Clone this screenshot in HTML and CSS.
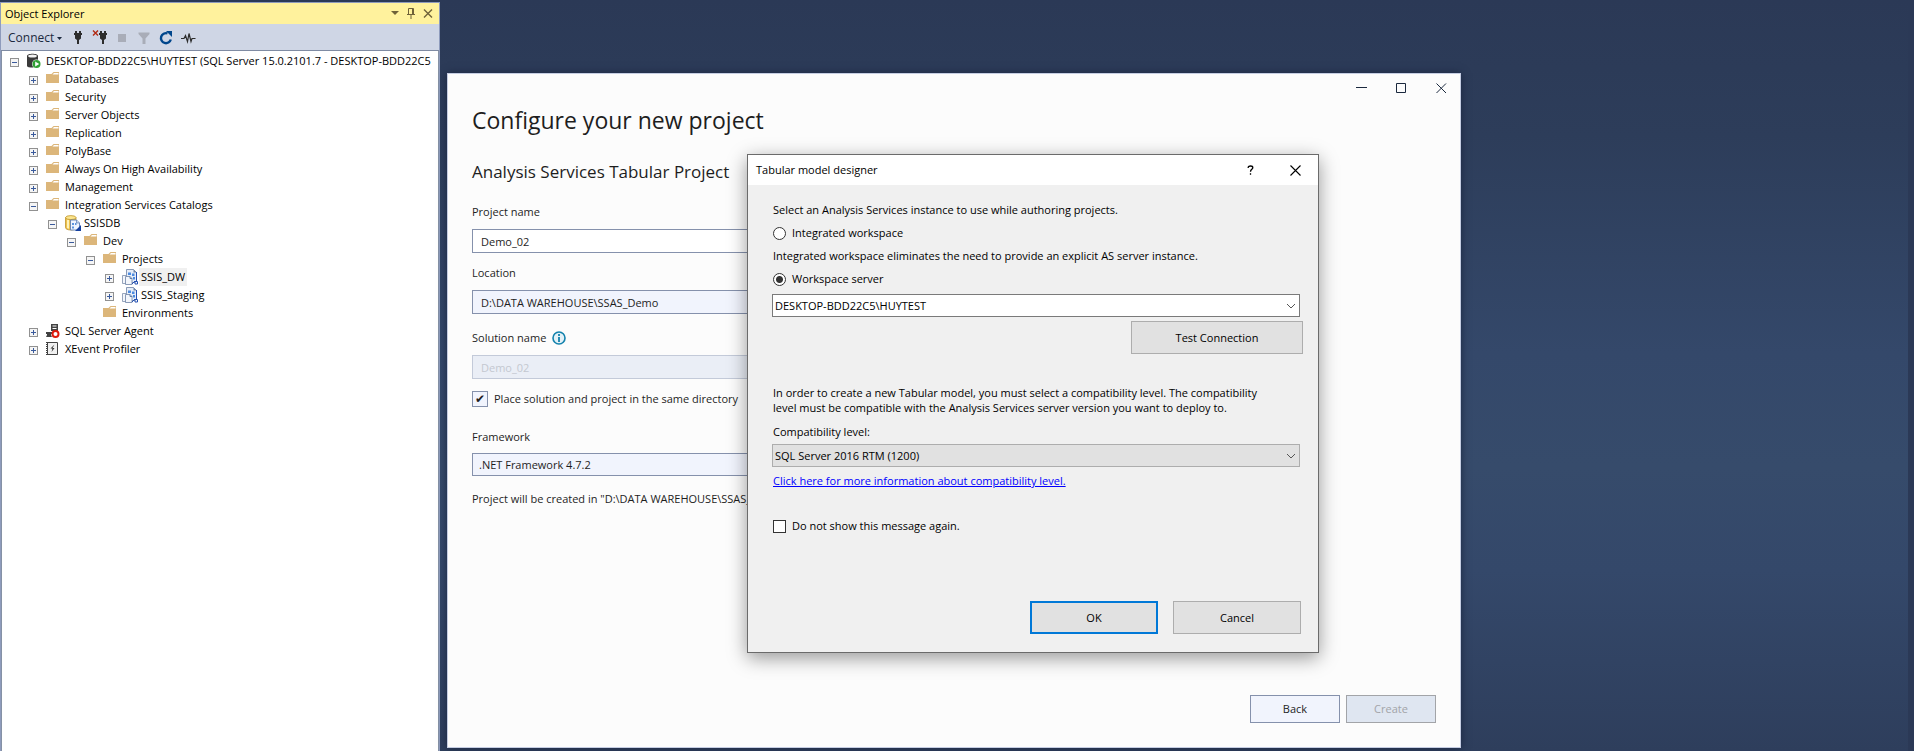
FILE: index.html
```html
<!DOCTYPE html>
<html lang="en">
<head>
<meta charset="utf-8">
<title>Object Explorer</title>
<link rel="stylesheet" href="styles.css">
</head>
<body>
<svg width="0" height="0" class="sprites" aria-hidden="true">
  <symbol id="folder" viewBox="0 0 16 16">
    <path d="M0 3h5.500l2-2H13v11H0z" fill="#dcb67a"/>
    <path d="M6.500 3.500l1.500-1.500h4.500v1.500z" fill="#fff"/>
  </symbol>
  <symbol id="catalog" viewBox="0 0 16 16">
    <path d="M.5 2.500v10c0 1.500 2 2.500 5.500 2.500s5-1 5-2.500v-10z" fill="#efc24c" stroke="#b88a1c" stroke-width=".7"/>
    <path d="M2 4v9l2 .8V5z" fill="#fff3b8"/>
    <ellipse cx="5.800" cy="2.600" rx="5.200" ry="2" fill="#fbe58e" stroke="#b88a1c" stroke-width=".7"/>
    <path d="M5.500 5h6l3 3v7h-9z" fill="#eef4ff" stroke="#5f7fb5" stroke-width=".9"/>
    <path d="M11.500 5v3h3" fill="#c5d6f0" stroke="#5f7fb5" stroke-width=".7"/>
    <path d="M7 8h2v2H7zM10 8h1.500v2H10zM7 11.500h2v2H7z" fill="#5c93dd"/>
    <path d="M16 10v6h-6z" fill="#1440a0"/>
  </symbol>
  <symbol id="package" viewBox="0 0 16 16">
    <path d="M4.500 .5h7l3 3v10h-10z" fill="#e6edf8" stroke="#6d83a6" stroke-width=".8"/>
    <path d="M11.500 .5v3h3z" fill="#6d83a6"/>
    <path d="M6 3.500h3V6H6zM10 4.500h2.500V7H10zM11 8h2v2.500h-2z" fill="#4c8be0"/>
    <path d="M.5 6.500h4v8h-4z" fill="#f3f6fb" stroke="#7d8fac" stroke-width=".8"/>
    <path d="M3.500 7.500h4.500l2 2v6H3.500z" fill="#f3f6fb" stroke="#6d83a6" stroke-width=".8"/>
    <path d="M8 7.500v2h2" fill="none" stroke="#56749f" stroke-width=".9"/>
    <path d="M14.500 3v9M10 15l3-3" fill="none" stroke="#2451b2"/>
    <path d="M13 12.500h2.500V15H13z" fill="#fff" stroke="#2451b2"/>
  </symbol>
</svg>

<aside class="explorer" aria-label="Object Explorer">
  <header class="pane-title">
    <h2>Object Explorer</h2>
    <button class="flat" aria-label="Window position"><svg width="8" height="5" viewBox="0 0 8 5"><path d="M0 0h8L4 4z" fill="#6f6239"/></svg></button>
    <button class="flat" aria-label="Auto hide"><svg width="8" height="11" viewBox="0 0 8 11" fill="none" stroke="#6f6239"><path d="M1.500 6V.5h5V6M0 6.500h8M4 7v4M5.500 1v5"/></svg></button>
    <button class="flat" aria-label="Close"><svg width="10" height="9" viewBox="0 0 10 9"><path d="M1 .5l8 8M9 .5l-8 8" stroke="#6f6239" stroke-width="1.400"/></svg></button>
  </header>
  <div class="toolbar" role="toolbar">
    <button class="flat connect">Connect<svg width="5" height="3" viewBox="0 0 5 3"><path d="M0 0h5L2.500 3z" fill="#1b293e"/></svg></button>
    <button class="flat" aria-label="Connect server"><svg width="16" height="16" viewBox="0 0 16 16" fill="#2d2d2d"><path d="M5 1h2v2h2V1h2v2h1v2h-1v3.500L9 10v4H7v-4L5 8.500V5H4V3h1z"/></svg></button>
    <button class="flat" aria-label="Disconnect"><svg width="16" height="16" viewBox="0 0 16 16" fill="#2d2d2d"><path d="M8 1h2v2h2V1h2v2h1v2h-1v3.500L12 10v4h-2v-4L8 8.500V5H7V3h1z"/><path d="M1 .5l5 5M6 .5l-5 5" stroke="#b22a12" stroke-width="1.400"/></svg></button>
    <button class="flat" aria-label="Stop" disabled><svg width="16" height="16" viewBox="0 0 16 16"><path d="M4 4h8v8H4z" fill="#a9adb8"/></svg></button>
    <button class="flat" aria-label="Filter" disabled><svg width="16" height="16" viewBox="0 0 16 16"><path d="M2.500 2.500h11v1.500L9.500 8.500V14h-3V8.500l-4-4.500z" fill="#a9adb8"/></svg></button>
    <button class="flat" aria-label="Refresh"><svg width="16" height="16" viewBox="0 0 16 16"><path d="M12.800 9.500A5 5 0 1 1 9.500 3.400" fill="none" stroke="#00468c" stroke-width="2.400"/><path d="M8 1h6v6z" fill="#00468c"/></svg></button>
    <button class="flat" aria-label="Activity monitor"><svg width="16" height="16" viewBox="0 0 16 16"><path d="M1 8.500h3l1.500-3 2 6 1.500-8 2 8 1-3h3.500" fill="none" stroke="#2d2d2d" stroke-width="1.200"/></svg></button>
  </div>
  <ul class="tree" role="tree">
    <li class="row l0"><button class="exp minus" aria-label="Collapse"></button><svg class="ico" viewBox="0 0 16 16"><path d="M0 3c0-3 11-3 11 0v10c0 2-11 2-11 0z" fill="#3a3a3a"/><ellipse cx="5.500" cy="3" rx="4.300" ry="1.500" fill="#f3f3f3"/><circle cx="9.500" cy="11" r="4.500" fill="#fff"/><circle cx="9.500" cy="11" r="4" fill="#32a036"/><path d="M8.200 8.500v5l4-2.500z" fill="#fff"/></svg><span>DESKTOP-BDD22C5\HUYTEST (SQL Server 15.0.2101.7 - DESKTOP-BDD22C5</span></li>
    <li class="row l1"><button class="exp" aria-label="Expand"></button><svg class="ico"><use href="#folder"/></svg><span>Databases</span></li>
    <li class="row l1"><button class="exp" aria-label="Expand"></button><svg class="ico"><use href="#folder"/></svg><span>Security</span></li>
    <li class="row l1"><button class="exp" aria-label="Expand"></button><svg class="ico"><use href="#folder"/></svg><span>Server Objects</span></li>
    <li class="row l1"><button class="exp" aria-label="Expand"></button><svg class="ico"><use href="#folder"/></svg><span>Replication</span></li>
    <li class="row l1"><button class="exp" aria-label="Expand"></button><svg class="ico"><use href="#folder"/></svg><span>PolyBase</span></li>
    <li class="row l1"><button class="exp" aria-label="Expand"></button><svg class="ico"><use href="#folder"/></svg><span>Always On High Availability</span></li>
    <li class="row l1"><button class="exp" aria-label="Expand"></button><svg class="ico"><use href="#folder"/></svg><span>Management</span></li>
    <li class="row l1"><button class="exp minus" aria-label="Collapse"></button><svg class="ico"><use href="#folder"/></svg><span>Integration Services Catalogs</span></li>
    <li class="row l2"><button class="exp minus" aria-label="Collapse"></button><svg class="ico"><use href="#catalog"/></svg><span>SSISDB</span></li>
    <li class="row l3"><button class="exp minus" aria-label="Collapse"></button><svg class="ico"><use href="#folder"/></svg><span>Dev</span></li>
    <li class="row l4"><button class="exp minus" aria-label="Collapse"></button><svg class="ico"><use href="#folder"/></svg><span>Projects</span></li>
    <li class="row l5"><button class="exp" aria-label="Expand"></button><svg class="ico"><use href="#package"/></svg><span class="selected">SSIS_DW</span></li>
    <li class="row l5"><button class="exp" aria-label="Expand"></button><svg class="ico"><use href="#package"/></svg><span>SSIS_Staging</span></li>
    <li class="row l4 leaf"><svg class="ico"><use href="#folder"/></svg><span>Environments</span></li>
    <li class="row l1"><button class="exp" aria-label="Expand"></button><svg class="ico" viewBox="0 0 16 16"><path d="M5 1h7v7H5z" fill="#424242"/><path d="M6.500 3h4M6.500 5.500h4" stroke="#fff"/><path d="M0 9h6v2H5v1l1 2H0l1-2v-1H0z" fill="#424242"/><circle cx="9.500" cy="11" r="3" fill="#fff" stroke="#e01b0c" stroke-width="2"/></svg><span>SQL Server Agent</span></li>
    <li class="row l1"><button class="exp" aria-label="Expand"></button><svg class="ico" viewBox="0 0 16 16"><path d="M1.500 1.500h10v12h-10z" fill="#f0f0f0" stroke="#424242"/><path d="M1 1v13" stroke="#424242" stroke-width="2" stroke-dasharray="1 1"/><path d="M8.500 3.500L4.500 7.500h2L5.500 11 8.500 7h-2L8.500 3.500z" fill="#303030"/></svg><span>XEvent Profiler</span></li>
  </ul>
</aside>

<main class="wizard">
  <div class="window-buttons">
    <button class="flat" aria-label="Minimize"><svg width="11" height="11" viewBox="0 0 11 11"><path d="M0 4.500h11" stroke="#1b293e"/></svg></button>
    <button class="flat" aria-label="Maximize"><svg width="11" height="11" viewBox="0 0 11 11"><path d="M.5 .5h9v9h-9z" fill="none" stroke="#1b293e"/></svg></button>
    <button class="flat" aria-label="Close"><svg width="11" height="11" viewBox="0 0 11 11"><path d="M.5 .5l9.500 9.500M10 .5L.5 10" stroke="#1b293e"/></svg></button>
  </div>
  <form class="project-form">
    <h1>Configure your new project</h1>
    <h2>Analysis Services Tabular Project</h2>
    <label for="name">Project name</label>
    <input class="field" id="name" type="text" value="Demo_02">
    <label for="location">Location</label>
    <input class="field tinted" id="location" type="text" value="D:\DATA WAREHOUSE\SSAS_Demo">
    <label for="solution" class="with-info">Solution name
      <svg width="14" height="14" viewBox="0 0 14 14"><circle cx="7" cy="7" r="6" fill="#e3f1f7" stroke="#1382ad" stroke-width="1.600"/><path d="M7 3v2M7 6v5" stroke="#1382ad" stroke-width="1.800"/></svg></label>
    <input class="field" id="solution" type="text" value="Demo_02" disabled>
    <div class="same-dir">
      <input id="same" type="checkbox" checked>
      <label for="same">Place solution and project in the same directory</label>
    </div>
    <label for="framework">Framework</label>
    <select class="field tinted framework" id="framework"><option>.NET Framework 4.7.2</option></select>
    <p>Project will be created in "D:\DATA WAREHOUSE\SSAS_Demo"</p>
  </form>
  <footer class="wizard-actions">
    <button>Back</button>
    <button disabled>Create</button>
  </footer>
</main>

<section class="dialog" role="dialog" aria-labelledby="dialog-title">
  <header class="dialog-title">
    <h2 id="dialog-title">Tabular model designer</h2>
    <button class="flat" aria-label="Help"><svg width="7" height="10" viewBox="0 0 7 10"><path d="M1.200 3V2.500C1.200 .5 5.800 .4 5.800 2.700 5.800 4.400 3.500 4.300 3.500 6.700M3.500 8.200v1.600" fill="none" stroke="#000" stroke-width="1.300"/></svg></button>
    <button class="flat" aria-label="Close"><svg width="11" height="11" viewBox="0 0 11 11"><path d="M.5 .5l10 10M10.500 .5l-10 10" stroke="#000" stroke-width="1.100"/></svg></button>
  </header>
  <form class="dialog-body">
    <p>Select an Analysis Services instance to use while authoring projects.</p>
    <label class="option"><input type="radio" name="workspace">Integrated workspace</label>
    <p>Integrated workspace eliminates the need to provide an explicit AS server instance.</p>
    <label class="option"><input type="radio" name="workspace" checked>Workspace server</label>
    <select class="combo" aria-label="Workspace server"><option>DESKTOP-BDD22C5\HUYTEST</option></select>
    <button type="button" class="push test">Test Connection</button>
    <p class="note">In order to create a new Tabular model, you must select a compatibility level. The compatibility<br>level must be compatible with the Analysis Services server version you want to deploy to.</p>
    <label for="level" class="level-label">Compatibility level:</label>
    <select class="combo gray" id="level"><option>SQL Server 2016 RTM (1200)</option></select>
    <a href="#info">Click here for more information about compatibility level.</a>
    <label class="option dismiss"><input type="checkbox">Do not show this message again.</label>
    <div class="dialog-actions">
      <button type="button" class="push primary">OK</button>
      <button type="button" class="push">Cancel</button>
    </div>
  </form>
</section>
</body>
</html>
```

FILE: styles.css
```css
* { box-sizing: border-box; }
body {
  margin: 0;
  height: 100vh;
  overflow: hidden;
  position: relative;
  padding-top: 2px;
  border-right: 6px solid #2b3956;
  background: linear-gradient(#2b3956, #2d3d5a 18%, #34486a 47%, #364b6b 62%, #34486a 76%, #2e3e5c);
  font: 11px/16px "Open Sans", "Noto Sans", sans-serif;
  color: #1e1e1e;
}
h1, h2, p, ul { margin: 0; padding: 0; font-weight: 400; }
button, input, select { font: inherit; color: inherit; margin: 0; }
.sprites { position: absolute; }
.flat { border: 0; background: none; padding: 0; display: flex; align-items: center; justify-content: center; }

.explorer {
  width: 440px;
  height: 100%;
  display: flex;
  flex-direction: column;
  border: 1px solid #8e9bbc;
  border-bottom: 0;
  background: #fff;
  color: #000;
}
.pane-title {
  height: 21px;
  flex: none;
  display: flex;
  align-items: center;
  gap: 8px;
  padding: 0 6px 0 4px;
  background: #fff29d;
}
.pane-title h2 { flex: 1; font-size: 11px; }
.toolbar {
  height: 27px;
  flex: none;
  display: flex;
  align-items: center;
  gap: 6px;
  padding: 2px 7px 0;
  background: #cfd6e5;
  border-bottom: 1px solid #7f8ba3;
}
.toolbar .connect { gap: 3px; margin-right: 2px; font-size: 12px; color: #1b293e; }
.tree { flex: 1; padding-top: 1px; list-style: none; overflow: hidden; border: 1px solid #8591a5; border-width: 0 1px; }
.row { height: 18px; display: flex; align-items: center; white-space: nowrap; padding-left: 8px; }
.row.l1 { padding-left: 27px; }
.row.l2 { padding-left: 46px; }
.row.l3 { padding-left: 65px; }
.row.l4 { padding-left: 84px; }
.row.l5 { padding-left: 103px; }
.row.leaf { padding-left: 101px; }
.exp {
  flex: none;
  width: 9px;
  height: 9px;
  padding: 0;
  margin: 3px 8px 0 0;
  border: 1px solid #919191;
  background:
    linear-gradient(#3a5a9c, #3a5a9c) center / 5px 1px no-repeat,
    linear-gradient(#3a5a9c, #3a5a9c) center / 1px 5px no-repeat,
    #f5f5f5;
}
.exp.minus { background: linear-gradient(#3a5a9c, #3a5a9c) center / 5px 1px no-repeat, #f5f5f5; }
.ico { flex: none; width: 16px; height: 16px; }
.row span { padding: 0 2px; margin-left: 1px; line-height: 18px; }
.row .selected { background: #f0f0f0; }

.wizard {
  position: absolute;
  top: 73px;
  right: 447px;
  bottom: 3px;
  left: 447px;
  display: flex;
  flex-direction: column;
  border: 1px solid #c5cde2;
  background: #fcfcfc;
  box-shadow: 0 0 8px #1c2740;
}
.window-buttons { display: flex; justify-content: flex-end; gap: 29px; padding: 9px 13px 0 0; }
.project-form { flex: 1; padding: 10px 24px 0; display: flex; flex-direction: column; align-items: stretch; }
.project-form h1 { font-size: 23px; line-height: 32px; }
.project-form h2 { font-size: 17px; line-height: 24px; margin: 24px 0 20px; }
.field {
  width: 50%;
  height: 24px;
  margin: 9px 0 12px;
  padding: 0 8px;
  border: 1px solid #8591ac;
  border-radius: 0;
  background: #fff;
}
.tinted { background: #f1f4fd; }
.field:disabled { background: #eaeef6; border-color: #c3cad9; color: #c4c8d0; }
.with-info { display: flex; align-items: center; gap: 6px; margin-top: 4px; }
.same-dir { display: flex; align-items: center; gap: 6px; margin-bottom: 22px; }
.same-dir input {
  appearance: none;
  width: 16px;
  height: 16px;
  border: 1px solid #8591ac;
  background: #f1f4fd;
}
.same-dir input:checked { display: grid; place-items: center; }
.same-dir input:checked::before { content: "✔"; font: 12px/14px "DejaVu Sans", sans-serif; color: #1e1e1e; }
.framework { appearance: none; height: 23px; padding: 0 6px; margin: 8px 0 15px; }
.wizard-actions { display: flex; justify-content: flex-end; gap: 6px; padding: 0 24px 24px; }
.wizard-actions button { width: 90px; height: 28px; border: 1px solid #8591ac; background: #f1f4fd; }
.wizard-actions button:disabled { border-color: #a2a4a8; background: #dfe6f1; color: #a2a4a8; }

.dialog {
  position: absolute;
  top: 154px;
  left: 747px;
  width: 572px;
  border: 1px solid #6b6b6b;
  background: #f0f0f0;
  box-shadow: 0 5px 18px rgb(0 0 0 / 40%);
  color: #000;
}
.dialog-title { height: 30px; display: flex; align-items: center; gap: 36px; padding: 0 17px 0 8px; background: #fff; }
.dialog-title h2 { flex: 1; font-size: 11px; }
.dialog-body { display: flex; flex-direction: column; align-items: flex-start; padding: 17px 15px 18px 25px; }
.option { display: flex; align-items: center; gap: 6px; margin: 7px 0; }
.option input { appearance: none; width: 13px; height: 13px; border: 1px solid #333; background: #fff; }
.option input[type="radio"] { border-radius: 50%; }
.option input[type="radio"]:checked { background: radial-gradient(#333 0 3px, #fff 4px); }
.combo {
  appearance: none;
  align-self: stretch;
  height: 23px;
  margin: 0 3px 4px -1px;
  padding: 0 2px;
  border: 1px solid #7a7a7a;
  border-radius: 0;
  background:
    linear-gradient(45deg, transparent 45%, #555 45% 60%, transparent 60%) right 8px center / 4px 4px no-repeat,
    linear-gradient(-45deg, transparent 45%, #555 45% 60%, transparent 60%) right 4px center / 4px 4px no-repeat,
    #fff;
}
.push { width: 128px; height: 33px; padding: 0; border: 1px solid #adadad; background-color: #e1e1e1; }
.push.test { width: 172px; align-self: flex-end; }
.push.primary { border: 2px solid #0078d7; }
.note { margin-top: 31px; line-height: 15px; }
.level-label { margin: 9px 0 4px; }
.combo.gray { border-color: #adadad; background-color: #e1e1e1; margin-bottom: 6px; }
.dialog-body a { color: #00f; }
.option.dismiss { margin: 29px 0 67px; }
.dialog-actions { align-self: flex-end; display: flex; gap: 15px; margin-right: 2px; }
```
